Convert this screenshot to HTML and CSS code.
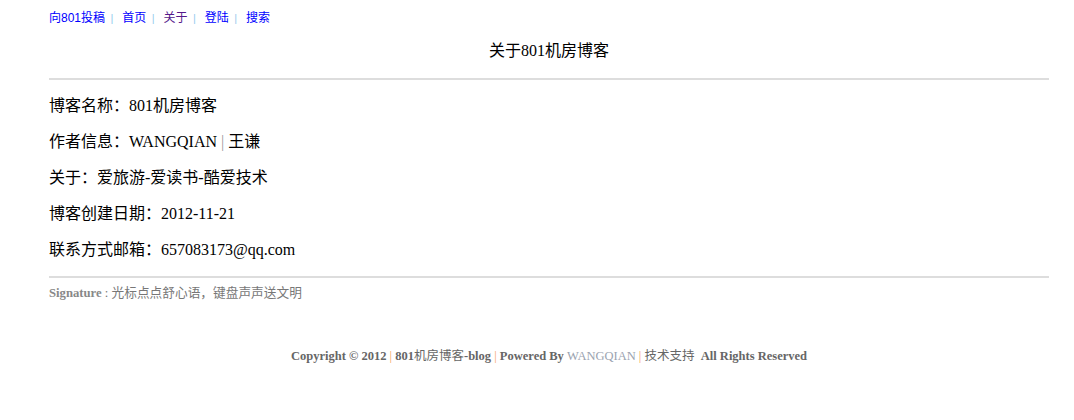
FILE: index.html
```html
<!DOCTYPE html>
<html lang="zh-CN">
<head>
    <meta charset="UTF-8">
    <title>关于801机房博客</title>
    <link rel="stylesheet" href="styles.css">
</head>
<body>
    <div class="wrap">
        <div class="topnav">
            <a href="#">向801投稿</a><span class="sep">|</span>
            <a href="#">首页</a><span class="sep">|</span>
            <a href="#" class="visited">关于</a><span class="sep">|</span>
            <a href="#">登陆</a><span class="sep">|</span>
            <a href="#">搜索</a>
        </div>

        <h1 class="title">关于801机房博客</h1>

        <div class="about">
            <p>博客名称：801机房博客</p>
            <p>作者信息：WANGQIAN <span class="bar">|</span> 王谦</p>
            <p>关于：爱旅游-爱读书-酷爱技术</p>
            <p>博客创建日期：2012-11-21</p>
            <p>联系方式邮箱：657083173@qq.com</p>
        </div>

        <div class="signature"><b>Signature</b> : 光标点点舒心语，键盘声声送文明</div>

        <div class="footer">
            Copyright © 2012 <span class="pipe">|</span> 801<span class="cn">机房博客</span>-blog <span class="pipe">|</span> Powered By <a href="#">WANGQIAN</a> <span class="pipe">|</span> <span class="cn">技术支持</span> &nbsp;All Rights Reserved
        </div>
    </div>
</body>
</html>
```

FILE: styles.css
```css
body {
    margin: 0;
    padding: 0;
    font-family: "Liberation Serif", "Noto Sans CJK SC", serif;
    color: #000;
    background: #fff;
}
.wrap {
    width: 1000px;
    margin-left: 49px;
}
.topnav {
    padding-top: 9px;
    height: 18px;
    font-size: 12px;
    line-height: 18px;
    font-family: "Liberation Sans", "Noto Sans CJK SC", sans-serif;
}
.topnav a {
    color: #0000ff;
    text-decoration: none;
}
.topnav a.visited {
    color: #551a8b;
}
.topnav .sep {
    color: #99ccee;
    margin: 0 5.5px;
    font-size: 11px;
}
.title {
    margin: 14px 0 0;
    padding-bottom: 17px;
    border-bottom: 2px solid #dddddd;
    font-size: 16px;
    font-weight: normal;
    line-height: 20px;
    text-align: center;
}
.about {
    padding: 8px 0 8px;
    border-bottom: 2px solid #dddddd;
}
.about p {
    margin: 0;
    height: 36px;
    font-size: 16px;
    line-height: 36px;
}
.about .bar {
    color: #999;
}
.signature {
    padding-top: 6px;
    font-size: 12.7px;
    line-height: 18px;
    color: #777;
}
.signature b {
    font-weight: bold;
    color: #888;
}
.footer {
    margin-top: 45px;
    font-size: 12.5px;
    line-height: 18px;
    font-weight: bold;
    color: #666;
    text-align: center;
}
.footer .cn {
    font-weight: normal;
}
.footer .pipe {
    color: #f7a460;
    font-weight: normal;
}
.footer a {
    color: #9aa3b0;
    font-weight: normal;
    text-decoration: none;
}
```
